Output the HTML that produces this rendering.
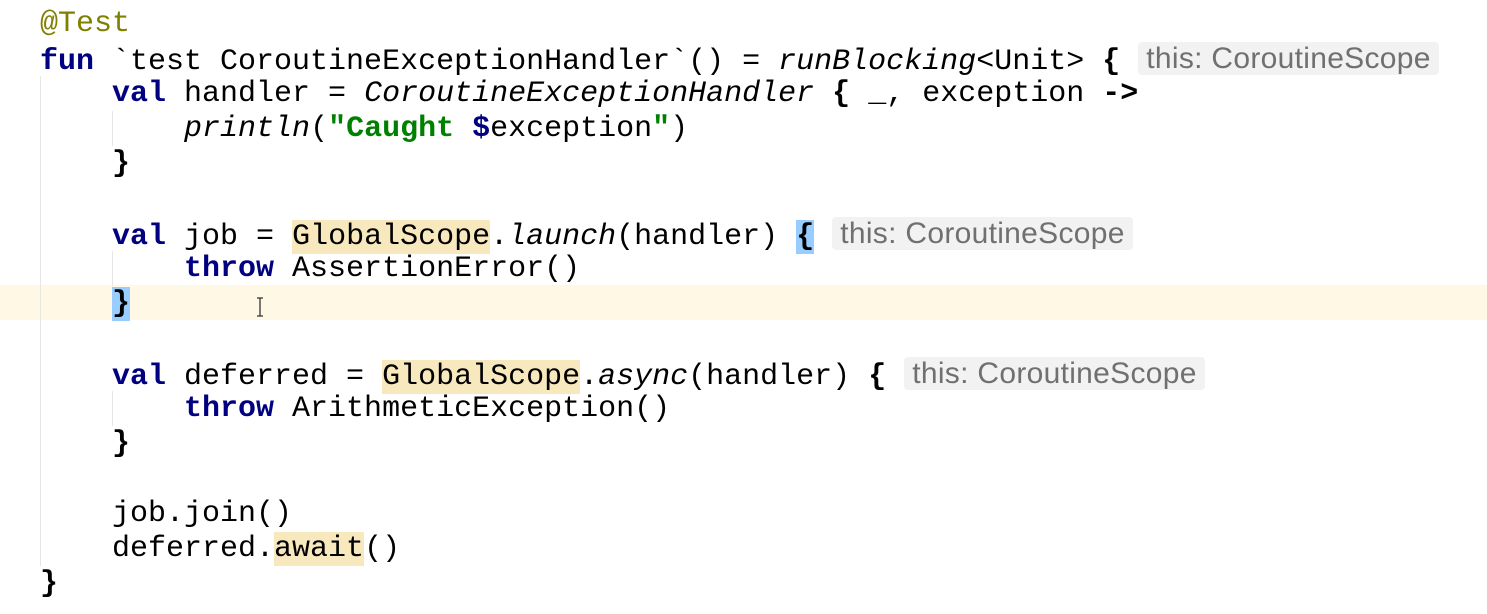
<!DOCTYPE html>
<html><head><style>
body{margin:0;background:#fff;width:1487px;height:614px;overflow:hidden;position:relative}
.code{position:absolute;left:40px;top:7px;font-family:"Liberation Mono",monospace;font-size:30px;line-height:35px;white-space:pre;color:#000}
.l{height:35px}
.k{color:#000080;font-weight:bold}
.a{color:#808000}
.s{color:#008000;font-weight:bold}
.i{font-style:italic}
.b{font-weight:bold}
.h{background:#f7e8bd}
.m{background:#99ccff}
.hint{font-family:"Liberation Sans",sans-serif;font-size:30px;letter-spacing:0.3px;color:#707070;background:#f2f2f2;border-radius:4px;padding:0 8px;position:relative;top:-1px}
.caret{position:absolute;left:0;top:285px;width:1487px;height:35px;background:#fef8e4}
.g{position:absolute;width:1px;background:#e6e6e6}
.cur{position:absolute;left:255px;top:297px;width:10px;height:20px}
</style></head><body>
<div class="caret"></div>
<div class="g" style="left:40px;top:76px;height:490px"></div>
<div class="g" style="left:112px;top:111px;height:35px"></div>
<div class="g" style="left:112px;top:251px;height:35px"></div>
<div class="g" style="left:112px;top:391px;height:35px"></div>
<svg class="cur" viewBox="0 0 10 20"><path d="M2 1h6M5 1v18M2 19h6" stroke="#333" stroke-width="1.3" fill="none"/></svg>
<div class="code"><div class="l"><span class="a">@Test</span></div><div class="l"><span class="k">fun</span> `test CoroutineExceptionHandler`() = <span class="i">runBlocking</span>&lt;Unit&gt; <span class="b">{</span> <span class="hint">this: CoroutineScope</span></div><div class="l">    <span class="k">val</span> handler = <span class="i">CoroutineExceptionHandler</span> <span class="b">{</span> _, exception <span class="b">-&gt;</span></div><div class="l">        <span class="i">println</span>(<span class="s">"Caught </span><span class="k">$</span>exception<span class="s">"</span>)</div><div class="l">    <span class="b">}</span></div><div class="l"> </div><div class="l">    <span class="k">val</span> job = <span class="h">GlobalScope</span>.<span class="i">launch</span>(handler) <span class="b m">{</span> <span class="hint">this: CoroutineScope</span></div><div class="l">        <span class="k">throw</span> AssertionError()</div><div class="l">    <span class="b m">}</span></div><div class="l"> </div><div class="l">    <span class="k">val</span> deferred = <span class="h">GlobalScope</span>.<span class="i">async</span>(handler) <span class="b">{</span> <span class="hint">this: CoroutineScope</span></div><div class="l">        <span class="k">throw</span> ArithmeticException()</div><div class="l">    <span class="b">}</span></div><div class="l"> </div><div class="l">    job.join()</div><div class="l">    deferred.<span class="h">await</span>()</div><div class="l"><span class="b">}</span></div></div>
</body></html>
